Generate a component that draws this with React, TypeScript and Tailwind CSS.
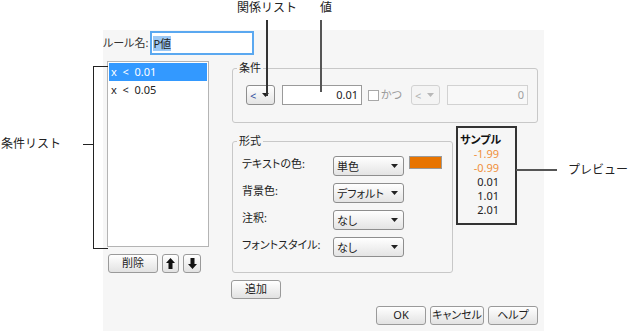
import type { ReactNode } from "react";

const jp = "font-['Noto_Sans','Noto_Sans_CJK_JP',sans-serif]";

function Dropdown({ label, className = "", disabled = false }: { label: string; className?: string; disabled?: boolean }) {
  return (
    <div
      className={`flex h-[20px] items-center justify-between whitespace-nowrap rounded-[3px] border pl-[3px] pr-[5px] text-[11px] ${
        disabled
          ? "border-[#d2d2d2] bg-[#f4f4f4] text-[#b0b0b0]"
          : "border-[#8e8e8e] bg-gradient-to-b from-white to-[#e4e4e4] text-[#222]"
      } ${className}`}
    >
      <span className="leading-none">{label}</span>
      <svg width="7" height="4" viewBox="0 0 7 4" className="shrink-0">
        <path d="M0 0H7L3.5 4Z" fill={disabled ? "#b8b8b8" : "#222"} />
      </svg>
    </div>
  );
}

function Button({ children, className = "" }: { children: ReactNode; className?: string }) {
  return (
    <div
      className={`flex h-[19px] items-center justify-center whitespace-nowrap rounded-[3px] border border-[#9a9a9a] bg-gradient-to-b from-white to-[#e2e2e2] text-[11px] text-[#222] ${className}`}
    >
      {children}
    </div>
  );
}

function Arrow({ up }: { up: boolean }) {
  return (
    <svg width="9" height="11" viewBox="0 0 9 11" className={up ? "" : "rotate-180"}>
      <path d="M4.5 0L9 5H6.5V11H2.5V5H0Z" fill="#111" />
    </svg>
  );
}

function FormatRow({ label, children }: { label: string; children: ReactNode }) {
  return (
    <div className="flex h-[27px] items-start">
      <span className="w-[91px] whitespace-nowrap pt-[1px] text-[11px] leading-[14px] text-[#222]">{label}</span>
      {children}
    </div>
  );
}

export default function App() {
  const samples = [
    { v: "-1.99", orange: true },
    { v: "-0.99", orange: true },
    { v: "0.01", orange: false },
    { v: "1.01", orange: false },
    { v: "2.01", orange: false },
  ];

  return (
    <div className={`relative h-[331px] w-[631px] overflow-hidden bg-white ${jp}`}>
      {/* dialog */}
      <div className="ml-[103px] mt-[30px] h-[301px] w-[441px] bg-[#f6f6f6] [font-feature-settings:'palt']">
        <div className="flex h-[24px] items-center pt-[2px]">
          <span className="whitespace-nowrap text-[11px] text-[#333]">ルール名:</span>
          <div className="ml-[2px] flex h-[24px] w-[104px] items-center border-2 border-[#5aa8f0] bg-white pl-[1px]">
            <span className="bg-[#9cc8f4] text-[11px] leading-[15px] text-[#222]">P値</span>
          </div>
        </div>

        <div className="mt-[7px] flex">
          {/* condition list */}
          <div className="ml-[4px] w-[102px]">
            <div className="h-[186px] border border-[#b4b4b4] bg-white p-px text-[11px] text-[#222]">
              <div className="flex h-[18px] items-center whitespace-pre bg-[#3399ff] pl-[2px] text-white">x  &lt;  0.01</div>
              <div className="flex h-[18px] items-center whitespace-pre pl-[2px]">x  &lt;  0.05</div>
            </div>
            <div className="mt-[7px] flex gap-[4px] pl-px">
              <Button className="w-[50px]">削除</Button>
              <Button className="w-[17px]">
                <Arrow up />
              </Button>
              <Button className="w-[18px]">
                <Arrow up={false} />
              </Button>
            </div>
          </div>

          {/* right column */}
          <div className="ml-[23px] w-[306px]">
            <div className="relative mt-[7px] h-[55px] rounded-[3px] border border-[#c8c8c8]">
              <span className="absolute left-[4px] top-[-8px] bg-[#f6f6f6] px-[2px] text-[11px] leading-[14px] text-[#222]">条件</span>
              <div className="flex items-center pl-[13px] pt-[16px]">
                <Dropdown label="<" className="w-[29px] text-[#3050a0]" />
                <div className="ml-[7px] flex h-[20px] w-[80px] items-center justify-end border border-[#9a9a9a] bg-white pr-[3px] text-[11px] text-[#222]">
                  0.01
                </div>
                <div className="ml-[6px] h-[11px] w-[11px] border border-[#a8a8a8] bg-white" />
                <span className="ml-[2px] whitespace-nowrap text-[11px] text-[#9a9a9a]">かつ</span>
                <Dropdown label="<" className="ml-[9px] w-[29px]" disabled />
                <div className="ml-[7px] flex h-[20px] w-[81px] items-center justify-end border border-[#d2d2d2] bg-[#f8f8f8] pr-[3px] text-[11px] text-[#a0a0a0]">
                  0
                </div>
              </div>
            </div>

            <div className="flex items-start">
              <div className="relative mt-[18px] h-[132px] w-[221px] rounded-[3px] border border-[#c8c8c8]">
                <span className="absolute left-[4px] top-[-8px] bg-[#f6f6f6] px-[2px] text-[11px] leading-[14px] text-[#222]">形式</span>
                <div className="pl-[9px] pt-[14px]">
                  <FormatRow label="テキストの色:">
                    <Dropdown label="単色" className="w-[71px]" />
                    <div className="ml-[5px] h-[13px] w-[33px] border border-[#9a9a9a] bg-[#e87400]" />
                  </FormatRow>
                  <FormatRow label="背景色:">
                    <Dropdown label="デフォルト" className="w-[71px]" />
                  </FormatRow>
                  <FormatRow label="注釈:">
                    <Dropdown label="なし" className="w-[71px]" />
                  </FormatRow>
                  <FormatRow label="フォントスタイル:">
                    <Dropdown label="なし" className="w-[71px]" />
                  </FormatRow>
                </div>
              </div>

              <div className="ml-[3px] mt-[3px] h-[99px] w-[61px] whitespace-nowrap border-2 border-[#333] bg-[#f6f6f6] pl-[2px] pt-[5px]">
                <div className="text-[11px] font-bold leading-[14px] text-[#111]">サンプル</div>
                <div className="pr-[16px] text-right text-[11px] leading-[14px]">
                  {samples.map((s) => (
                    <div key={s.v} className={`h-[14px] ${s.orange ? "text-[#f0903c]" : "text-[#222]"}`}>
                      {s.v}
                    </div>
                  ))}
                </div>
              </div>
            </div>

            <Button className="ml-[-1px] mt-[7px] w-[50px]">追加</Button>

            <div className="mt-[7px] flex justify-end gap-[4px]">
              <Button className="w-[50px]">OK</Button>
              <Button className="w-[54px]">キャンセル</Button>
              <Button className="w-[50px]">ヘルプ</Button>
            </div>
          </div>
        </div>
      </div>

      {/* annotations */}
      <span className="absolute left-[237px] top-[1px] text-[12px] leading-[14px] text-[#222]">関係リスト</span>
      <div className="absolute left-[266px] top-[20px] h-[76px] w-[2px] bg-[#333]" />
      <span className="absolute left-[320px] top-[1px] text-[12px] leading-[14px] text-[#222]">値</span>
      <div className="absolute left-[320px] top-[20px] h-[72px] w-[2px] bg-[#555]" />

      <span className="absolute left-[1px] top-[137px] text-[12px] leading-[14px] text-[#222]">条件リスト</span>
      <div className="absolute left-[83px] top-[144px] h-px w-[10px] bg-[#222]" />
      <div className="absolute left-[93px] top-[66px] h-[183px] w-[15px] border-y border-l border-[#222]" />

      <div className="absolute left-[516px] top-[169px] h-[2px] w-[41px] bg-[#555]" />
      <span className="absolute left-[568px] top-[163px] text-[12px] leading-[14px] text-[#222]">プレビュー</span>
    </div>
  );
}
